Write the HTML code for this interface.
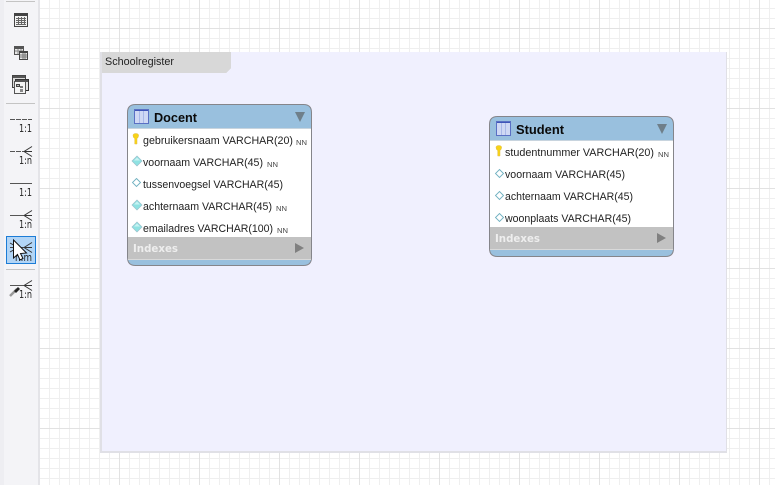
<!DOCTYPE html>
<html><head><meta charset="utf-8"><title>Schoolregister</title>
<style>
html,body{margin:0;padding:0;background:#fff;width:775px;height:485px;overflow:hidden}
svg{display:block}
text{font-family:"Liberation Sans",sans-serif}
.r{font-size:11px;fill:#222}
.n{font-size:7px;fill:#444}
.t{font-size:13px;font-weight:bold;fill:#0a0a0a}
.i{font-family:"DejaVu Sans",sans-serif;font-size:11px;font-weight:bold;fill:#eeeeee}
.l{font-family:"DejaVu Sans",sans-serif;font-size:10.5px;fill:#222}
</style></head><body>
<svg width="775" height="485" viewBox="0 0 775 485" xmlns="http://www.w3.org/2000/svg" shape-rendering="crispEdges">
<defs>
<pattern id="g" width="10" height="10" patternUnits="userSpaceOnUse" x="9" y="8">
<rect width="10" height="10" fill="#fff"/><rect width="1" height="10" fill="#efefef"/><rect width="10" height="1" fill="#efefef"/>
</pattern>
<pattern id="G" width="80" height="80" patternUnits="userSpaceOnUse" x="39" y="28">
<rect width="1" height="80" fill="#e2e2e2"/><rect width="80" height="1" fill="#e2e2e2"/>
</pattern>
<symbol id="tbl" viewBox="0 0 15 15"><rect x="0.5" y="0.5" width="14" height="14" fill="#cfd8f4" stroke="#5a70c4"/><rect x="1" y="1" width="13" height="1" fill="#3f55b8"/><path d="M5.500 2v12M9.500 2v12" stroke="#a9b8e8"/></symbol>
<g id="key"><path d="M0 2Q0 0 2.800 0T5.600 2Q5.600 4.200 4 5V10.500H1.700V5Q0 4.200 0 2Z" fill="#f7d317" stroke="#e0bc50" stroke-width=".5" shape-rendering="auto"/></g>
<g id="dc"><path d="M5 0L10 5 5 10 0 5Z" fill="#8fe2e2" stroke="#9cc0cc" stroke-width=".7" shape-rendering="auto"/><path d="M5 1.500L8 4.500H2Z" fill="#c8f2f2" shape-rendering="auto"/></g>
<g id="do"><path d="M4.500 .5L8.500 4.500 4.500 8.500 .5 4.500Z" fill="#fff" stroke="#6fb0c0" stroke-width=".9" shape-rendering="auto"/></g>
<g id="crow" fill="none" stroke="#333" shape-rendering="auto"><path d="M0 0L-8 0M-8 0L0 -5M-8 0L0 5" stroke-width="1"/></g>
</defs>

<rect width="775" height="485" fill="url(#g)"/>
<rect width="775" height="485" fill="url(#G)"/>

<!-- toolbar -->
<rect x="0" y="0" width="39" height="485" fill="#f4f4f7"/>
<rect x="0" y="0" width="4" height="485" fill="#eeeef2"/>
<rect x="38" y="0" width="2" height="485" fill="#e4e4e8"/>
<rect x="6" y="1" width="29" height="1" fill="#c4c4c4"/>
<rect x="6" y="103" width="29" height="1" fill="#c4c4c4"/>
<rect x="6" y="269" width="29" height="1" fill="#c4c4c4"/>

<!-- table icon -->
<g>
<rect x="14.500" y="13.500" width="13" height="13" fill="#f2f2f2" stroke="#444"/>
<rect x="15" y="14" width="12" height="2" fill="#444"/>
<path d="M16 18.500h10M16 20.500h10M16 22.500h10M16 24.500h10M18.500 17v8M21.500 17v8M24.500 17v8" stroke="#666" fill="none"/>
</g>
<!-- view icon -->
<g>
<rect x="14.500" y="46.500" width="9" height="8" fill="#e8e8e8" stroke="#555"/>
<rect x="15" y="47" width="8" height="2" fill="#555"/>
<path d="M15 51h8M18 49v5M21 49v5" stroke="#888"/>
<rect x="19.500" y="51.500" width="8" height="8" fill="#e8e8e8" stroke="#444"/>
<rect x="20" y="52" width="7" height="1" fill="#444"/>
<path d="M20 55h7M20 57h7M23 53v6M25 53v6" stroke="#777"/>
</g>
<!-- routine group icon -->
<g>
<rect x="12.500" y="75.500" width="13" height="12" fill="#d9d9d9" stroke="#444"/>
<rect x="13" y="76" width="12" height="2" fill="#555"/>
<rect x="15.500" y="79.500" width="13" height="11" fill="#e4e4e4" stroke="#333"/>
<rect x="16" y="80" width="12" height="2" fill="#555"/>
<rect x="14.500" y="81.500" width="11" height="12" fill="#f4f4f4" stroke="#555"/>
<rect x="16.500" y="84.500" width="3" height="2" fill="#bbb" stroke="#444"/>
<rect x="20" y="86" width="3" height="2" fill="#777"/>
<rect x="20" y="89" width="3" height="3" fill="#888"/>
</g>

<!-- relationship 1:1 dashed -->
<rect x="10" y="119" width="22" height="1" fill="#555"/>
<path d="M15 119.500h1M21 119.500h1M27 119.500h1" stroke="#f4f4f7"/>
<text class="l" x="19" y="132" textLength="13" lengthAdjust="spacingAndGlyphs">1:1</text>
<!-- 1:n dashed -->
<rect x="10" y="151" width="22" height="1" fill="#555"/>
<path d="M15 151.500h1M21 151.500h1" stroke="#f4f4f7"/>
<use href="#crow" x="32" y="151.500"/>
<text class="l" x="19" y="164" textLength="13" lengthAdjust="spacingAndGlyphs">1:n</text>
<!-- 1:1 -->
<rect x="10" y="183" width="22" height="1" fill="#555"/>
<text class="l" x="19" y="196" textLength="13" lengthAdjust="spacingAndGlyphs">1:1</text>
<!-- 1:n -->
<rect x="10" y="215" width="22" height="1" fill="#555"/>
<use href="#crow" x="32" y="215.500"/>
<text class="l" x="19" y="228" textLength="13" lengthAdjust="spacingAndGlyphs">1:n</text>
<!-- n:m selected -->
<rect x="6.500" y="236.500" width="29" height="27" fill="#b2d5f6" stroke="#1c7cd6"/>
<rect x="10" y="247" width="22" height="1" fill="#444"/>
<g shape-rendering="auto"><use href="#crow" x="32" y="247.500"/><path d="M10 243L18 247.500L10 252" fill="none" stroke="#333"/></g>
<text class="l" x="15" y="261" textLength="17" lengthAdjust="spacingAndGlyphs">n:m</text>
<path d="M13.500 240V258L17.500 254.500L20 260L23 258.500L20.500 253.500L26.500 253Z" fill="#fff" stroke="#111" stroke-width="1" shape-rendering="auto"/>
<!-- 1:n existing -->
<rect x="10" y="285" width="22" height="1" fill="#555"/>
<use href="#crow" x="32" y="285.500"/>
<g shape-rendering="auto"><path d="M10 296L17 289" stroke="#999" stroke-width="2.500"/><path d="M14 291L18 287L20 289L16 293Z" fill="#222"/></g>
<text class="l" x="19" y="298" textLength="13" lengthAdjust="spacingAndGlyphs">1:n</text>

<!-- layer -->
<rect x="100" y="52" width="627" height="401" fill="#e0e0e6"/>
<rect x="102" y="52" width="624" height="399" fill="#f0f0fe"/>
<path d="M102 52H231V68L226 73H102Z" fill="#d8d8d8"/>
<text class="r" x="105" y="65" textLength="69" lengthAdjust="spacingAndGlyphs">Schoolregister</text>

<!-- Docent -->
<g>
<path d="M135.500 104.500H303.500Q311.500 104.500 311.500 112.500V257.500Q311.500 265.500 303.500 265.500H135.500Q127.500 265.500 127.500 257.500V112.500Q127.500 104.500 135.500 104.500Z" fill="#99c0de" stroke="#85858a" shape-rendering="auto"/>
<rect x="128" y="128" width="183" height="1" fill="#c8d4de"/>
<rect x="128" y="129" width="183" height="108" fill="#fff"/>
<rect x="128" y="237" width="183" height="22" fill="#c2c2c2"/>
<rect x="128" y="259" width="183" height="1" fill="#d9d9d9"/>
<use href="#tbl" x="134" y="109" width="15" height="15"/>
<text class="t" x="154" y="122" textLength="43" lengthAdjust="spacingAndGlyphs">Docent</text>
<path d="M295 112H305L300 122Z" fill="#6f7f8a" shape-rendering="auto"/>
<use href="#key" x="133" y="133.500"/>
<use href="#dc" x="132" y="156"/>
<use href="#do" x="132" y="178"/>
<use href="#dc" x="132" y="200"/>
<use href="#dc" x="132" y="222"/>
<text class="r" x="143" y="144" textLength="150" lengthAdjust="spacingAndGlyphs">gebruikersnaam VARCHAR(20)</text>
<text class="n" x="296" y="145" textLength="11" lengthAdjust="spacingAndGlyphs">NN</text>
<text class="r" x="143" y="166" textLength="120" lengthAdjust="spacingAndGlyphs">voornaam VARCHAR(45)</text>
<text class="n" x="267" y="167" textLength="11" lengthAdjust="spacingAndGlyphs">NN</text>
<text class="r" x="143" y="188" textLength="140" lengthAdjust="spacingAndGlyphs">tussenvoegsel VARCHAR(45)</text>
<text class="r" x="143" y="210" textLength="129" lengthAdjust="spacingAndGlyphs">achternaam VARCHAR(45)</text>
<text class="n" x="276" y="211" textLength="11" lengthAdjust="spacingAndGlyphs">NN</text>
<text class="r" x="143" y="232" textLength="130" lengthAdjust="spacingAndGlyphs">emailadres VARCHAR(100)</text>
<text class="n" x="277" y="233" textLength="11" lengthAdjust="spacingAndGlyphs">NN</text>
<text class="i" x="133" y="252" textLength="45" lengthAdjust="spacingAndGlyphs">Indexes</text>
<path d="M295 243L304 248L295 253Z" fill="#808080" shape-rendering="auto"/>
</g>

<!-- Student -->
<g>
<path d="M497.500 116.500H665.500Q673.500 116.500 673.500 124.500V248.500Q673.500 256.500 665.500 256.500H497.500Q489.500 256.500 489.500 248.500V124.500Q489.500 116.500 497.500 116.500Z" fill="#99c0de" stroke="#85858a" shape-rendering="auto"/>
<rect x="490" y="140" width="183" height="1" fill="#c8d4de"/>
<rect x="490" y="141" width="183" height="86" fill="#fff"/>
<rect x="490" y="227" width="183" height="22" fill="#c2c2c2"/>
<rect x="490" y="249" width="183" height="1" fill="#d9d9d9"/>
<use href="#tbl" x="496" y="121" width="15" height="15"/>
<text class="t" x="516" y="134" textLength="48" lengthAdjust="spacingAndGlyphs">Student</text>
<path d="M657 124H667L662 134Z" fill="#6f7f8a" shape-rendering="auto"/>
<use href="#key" x="496" y="145.500"/>
<use href="#do" x="495" y="169"/>
<use href="#do" x="495" y="191"/>
<use href="#do" x="495" y="213"/>
<text class="r" x="505" y="156" textLength="149" lengthAdjust="spacingAndGlyphs">studentnummer VARCHAR(20)</text>
<text class="n" x="658" y="157" textLength="11" lengthAdjust="spacingAndGlyphs">NN</text>
<text class="r" x="505" y="178" textLength="120" lengthAdjust="spacingAndGlyphs">voornaam VARCHAR(45)</text>
<text class="r" x="505" y="200" textLength="128" lengthAdjust="spacingAndGlyphs">achternaam VARCHAR(45)</text>
<text class="r" x="505" y="222" textLength="126" lengthAdjust="spacingAndGlyphs">woonplaats VARCHAR(45)</text>
<text class="i" x="495" y="242" textLength="45" lengthAdjust="spacingAndGlyphs">Indexes</text>
<path d="M657 233L666 238L657 243Z" fill="#808080" shape-rendering="auto"/>
</g>
</svg>
</body></html>
